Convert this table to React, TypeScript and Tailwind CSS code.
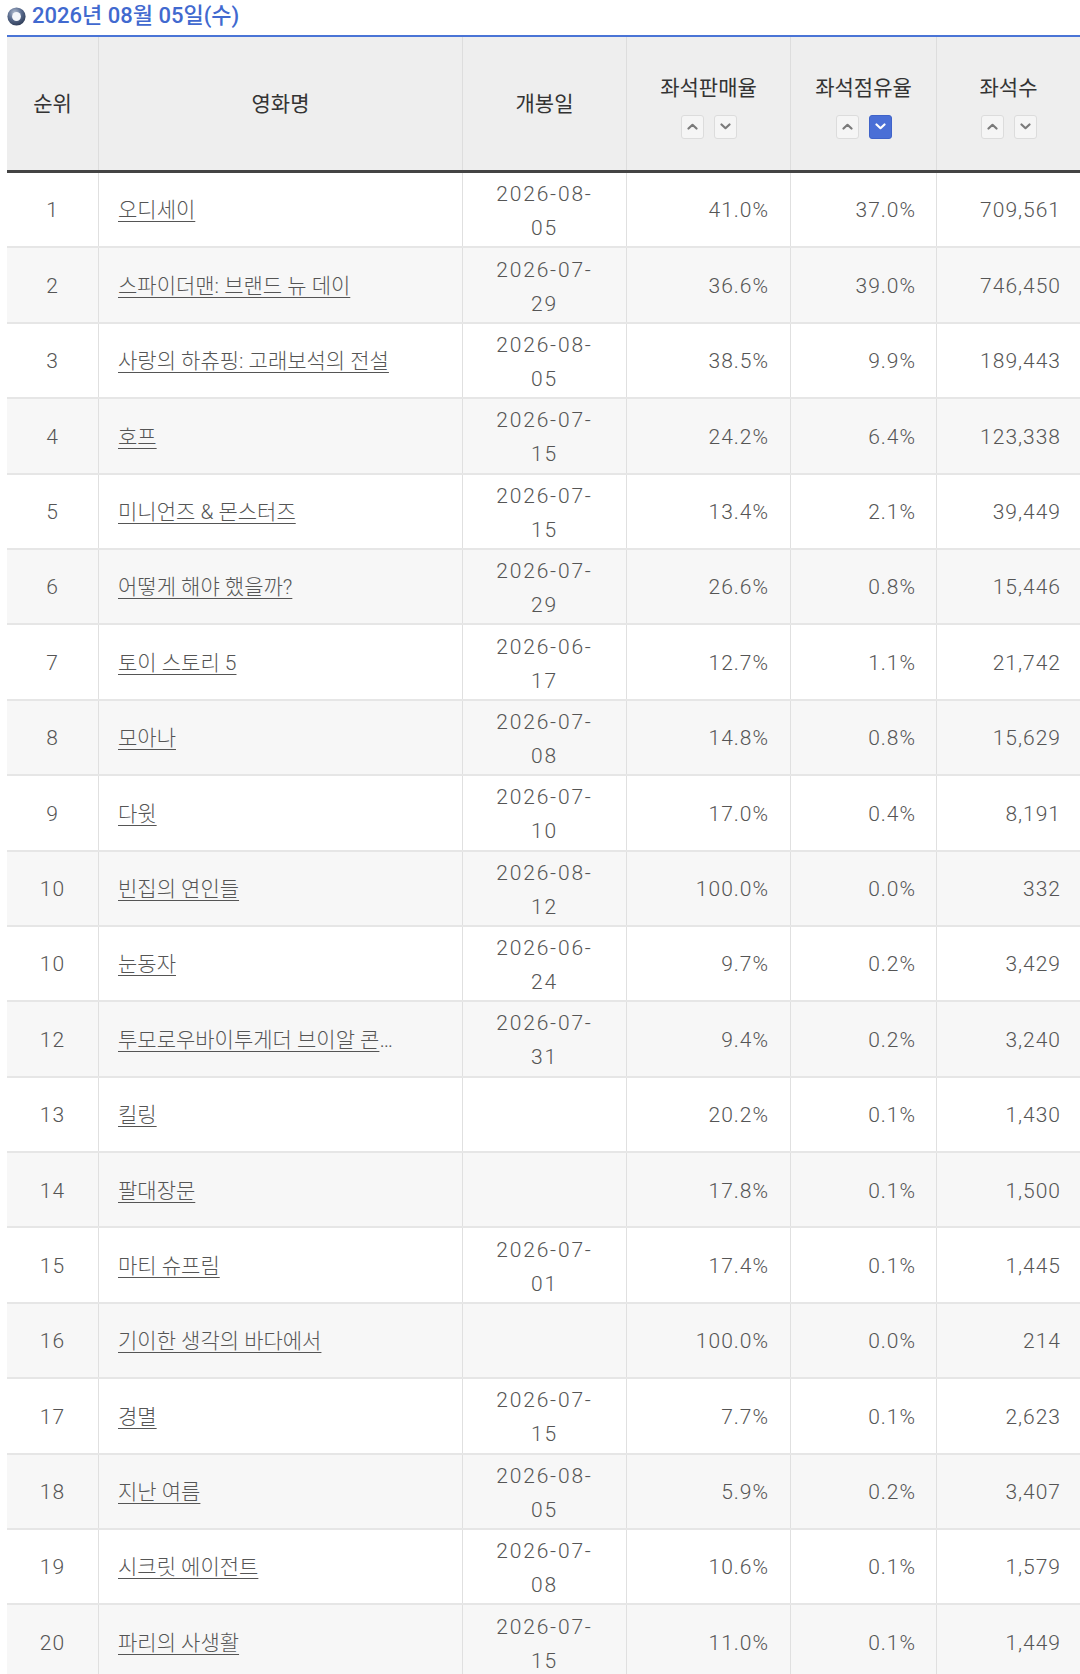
import React from "react";

type Row = {
  rank: string;
  name: string;
  ellipsis?: boolean;
  date?: string;
  sales: string;
  share: string;
  seats: string;
};

const rows: Row[] = [
  { rank: "1", name: "오디세이", date: "2026-08-05", sales: "41.0%", share: "37.0%", seats: "709,561" },
  { rank: "2", name: "스파이더맨: 브랜드 뉴 데이", date: "2026-07-29", sales: "36.6%", share: "39.0%", seats: "746,450" },
  { rank: "3", name: "사랑의 하츄핑: 고래보석의 전설", date: "2026-08-05", sales: "38.5%", share: "9.9%", seats: "189,443" },
  { rank: "4", name: "호프", date: "2026-07-15", sales: "24.2%", share: "6.4%", seats: "123,338" },
  { rank: "5", name: "미니언즈 & 몬스터즈", date: "2026-07-15", sales: "13.4%", share: "2.1%", seats: "39,449" },
  { rank: "6", name: "어떻게 해야 했을까?", date: "2026-07-29", sales: "26.6%", share: "0.8%", seats: "15,446" },
  { rank: "7", name: "토이 스토리 5", date: "2026-06-17", sales: "12.7%", share: "1.1%", seats: "21,742" },
  { rank: "8", name: "모아나", date: "2026-07-08", sales: "14.8%", share: "0.8%", seats: "15,629" },
  { rank: "9", name: "다윗", date: "2026-07-10", sales: "17.0%", share: "0.4%", seats: "8,191" },
  { rank: "10", name: "빈집의 연인들", date: "2026-08-12", sales: "100.0%", share: "0.0%", seats: "332" },
  { rank: "10", name: "눈동자", date: "2026-06-24", sales: "9.7%", share: "0.2%", seats: "3,429" },
  { rank: "12", name: "투모로우바이투게더 브이알 콘", ellipsis: true, date: "2026-07-31", sales: "9.4%", share: "0.2%", seats: "3,240" },
  { rank: "13", name: "킬링", sales: "20.2%", share: "0.1%", seats: "1,430" },
  { rank: "14", name: "팔대장문", sales: "17.8%", share: "0.1%", seats: "1,500" },
  { rank: "15", name: "마티 슈프림", date: "2026-07-01", sales: "17.4%", share: "0.1%", seats: "1,445" },
  { rank: "16", name: "기이한 생각의 바다에서", sales: "100.0%", share: "0.0%", seats: "214" },
  { rank: "17", name: "경멸", date: "2026-07-15", sales: "7.7%", share: "0.1%", seats: "2,623" },
  { rank: "18", name: "지난 여름", date: "2026-08-05", sales: "5.9%", share: "0.2%", seats: "3,407" },
  { rank: "19", name: "시크릿 에이전트", date: "2026-07-08", sales: "10.6%", share: "0.1%", seats: "1,579" },
  { rank: "20", name: "파리의 사생활", date: "2026-07-15", sales: "11.0%", share: "0.1%", seats: "1,449" },
];

const FONT = { fontFamily: 'Roboto, "Noto Sans CJK KR", sans-serif' };

function Chevron({ up, color }: { up: boolean; color: string }) {
  return (
    <svg width="11" height="7" viewBox="0 0 11 7">
      <path
        d={up ? "M1.5 5.5 L5.5 1.8 L9.5 5.5" : "M1.5 1.5 L5.5 5.2 L9.5 1.5"}
        fill="none"
        stroke={color}
        strokeWidth="2.2"
        strokeLinecap="round"
        strokeLinejoin="round"
      />
    </svg>
  );
}

function SortButtons({ active }: { active?: "up" | "down" }) {
  const on = "w-[23px] h-[24px] rounded-[3px] bg-[#4a6fd6] border border-[#3f63c9] flex items-center justify-center";
  const off = "w-[23px] h-[24px] rounded-[3px] border border-[#dcdcdc] bg-[#f5f5f5] flex items-center justify-center";
  return (
    <div className="flex gap-[10px]">
      <div className={active === "up" ? on : off}>
        <Chevron up color={active === "up" ? "#ffffff" : "#7a7a7a"} />
      </div>
      <div className={active === "down" ? on : off}>
        <Chevron up={false} color={active === "down" ? "#ffffff" : "#7a7a7a"} />
      </div>
    </div>
  );
}

function SortHeader({ label, active }: { label: string; active?: "up" | "down" }) {
  return (
    <div className="border-l border-[#dddddd] flex flex-col items-center justify-center gap-[13px] pt-[5px]">
      <span className="leading-[28px]">{label}</span>
      <SortButtons active={active} />
    </div>
  );
}

export default function App() {
  const grid = "grid grid-cols-[91px_364px_164px_164px_146px_144px]";
  return (
    <div className="w-[1080px] h-[1674px] overflow-hidden bg-white pl-[7px]" style={FONT}>
      <div className="h-[35px] flex items-center gap-[6px]">
        <svg width="19" height="19" viewBox="0 0 18 18" className="mt-[-3px]">
          <defs>
            <radialGradient id="ring" cx="40%" cy="30%" r="75%">
              <stop offset="0%" stopColor="#b4bfd2" />
              <stop offset="50%" stopColor="#5a6c8e" />
              <stop offset="100%" stopColor="#2a3752" />
            </radialGradient>
          </defs>
          <circle cx="9" cy="9" r="8.6" fill="url(#ring)" />
          <circle cx="9" cy="9" r="4.2" fill="#f4f6fa" />
        </svg>
        <span className="text-[22px] leading-[28px] font-medium text-[#4169cf] mt-[-4px]">
          2026년 08월 05일(수)
        </span>
      </div>

      <div className={`${grid} h-[138px] border-t-2 border-t-[#4a74d6] border-b-[3px] border-b-[#444444] bg-[#eeeeee] text-[21px] text-[#333333]`}>
        <div className="flex items-center justify-center pt-[3px]">순위</div>
        <div className="border-l border-[#dddddd] flex items-center justify-center pt-[3px]">영화명</div>
        <div className="border-l border-[#dddddd] flex items-center justify-center pt-[3px]">개봉일</div>
        <SortHeader label="좌석판매율" />
        <SortHeader label="좌석점유율" active="down" />
        <SortHeader label="좌석수" />
      </div>

      {rows.map((r, i) => {
        const dateParts = r.date ? [r.date.slice(0, 8), r.date.slice(8)] : null;
        return (
          <div
            key={i}
            className={`${grid} h-[75.4px] border-b-2 border-[#e6e6e6] text-[21px] font-light text-[#555555] ${
              i % 2 === 1 ? "bg-[#f7f7f7]" : "bg-white"
            }`}
          >
            <div className="flex items-center justify-center tracking-[1px] pt-[3px]">{r.rank}</div>
            <div className="border-l border-[#e0e0e0] flex items-center pl-[19px] pt-[3px] whitespace-nowrap overflow-hidden">
              <span className="underline underline-offset-[4px] decoration-[1px] text-[#555555]">{r.name}</span>
              {r.ellipsis && <span className="text-[#555555]">…</span>}
            </div>
            <div className="border-l border-[#e0e0e0] flex flex-col items-center justify-center leading-[34px] tracking-[1.8px] pt-[3px]">
              {dateParts && (
                <>
                  <span>{dateParts[0]}</span>
                  <span>{dateParts[1]}</span>
                </>
              )}
            </div>
            <div className="border-l border-[#e0e0e0] flex items-center justify-end pr-[21px] pt-[3px] tracking-[1px]">{r.sales}</div>
            <div className="border-l border-[#e0e0e0] flex items-center justify-end pr-[20px] pt-[3px] tracking-[1px]">{r.share}</div>
            <div className="border-l border-[#e0e0e0] flex items-center justify-end pr-[19px] pt-[3px] tracking-[1px]">{r.seats}</div>
          </div>
        );
      })}
    </div>
  );
}
